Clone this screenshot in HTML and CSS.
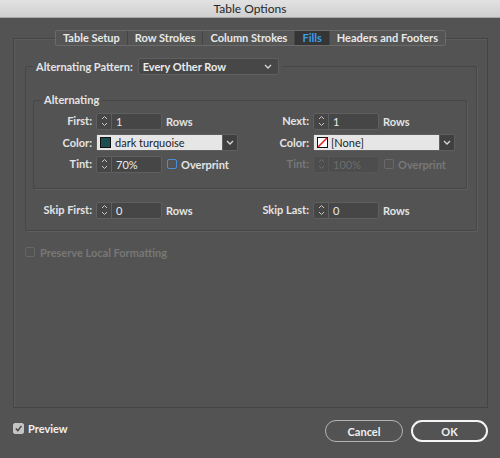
FILE: index.html
```html
<!DOCTYPE html>
<html lang="en">
<head>
    <meta charset="UTF-8">
    <title>Table Options</title>
    <link rel="stylesheet" href="styles.css">
</head>
<body>

<div class="titlebar">Table Options</div>

<div class="dialog">
    <div class="panel">
        <!-- Tabs -->
        <div class="tabs">
            <span class="tab">Table Setup</span>
            <span class="tab">Row Strokes</span>
            <span class="tab">Column Strokes</span>
            <span class="tab active">Fills</span>
            <span class="tab">Headers and Footers</span>
        </div>

        <fieldset class="group pattern">
            <legend class="pattern-legend">
                <span class="pattern-label">Alternating Pattern:</span>
                <span class="select">
                    Every Other Row
                    <svg class="chevron" width="8" height="5" viewBox="0 0 8 5"><path d="M1 1 L4 4 L7 1" fill="none" stroke="#d8d8d8" stroke-width="1.3"/></svg>
                </span>
            </legend>

            <fieldset class="group alternating">
                <legend class="group-title">Alternating</legend>
                <div class="grid">
                    <label class="lbl">First:</label>
                    <div class="cell">
                        <span class="spinner">
                            <span class="arrows"><svg width="7" height="12" viewBox="0 0 7 12"><path d="M1 4 L3.5 1.5 L6 4 M1 8 L3.5 10.5 L6 8" fill="none" stroke="#c8c8c8" stroke-width="1"/></svg></span>
                            <span class="value">1</span>
                        </span>
                        <span class="unit">Rows</span>
                    </div>
                    <label class="lbl">Next:</label>
                    <div class="cell">
                        <span class="spinner">
                            <span class="arrows"><svg width="7" height="12" viewBox="0 0 7 12"><path d="M1 4 L3.5 1.5 L6 4 M1 8 L3.5 10.5 L6 8" fill="none" stroke="#c8c8c8" stroke-width="1"/></svg></span>
                            <span class="value">1</span>
                        </span>
                        <span class="unit">Rows</span>
                    </div>

                    <label class="lbl">Color:</label>
                    <div class="cell">
                        <span class="color-select">
                            <span class="color-value"><span class="swatch turquoise"></span>dark turquoise</span>
                            <span class="color-arrow"><svg width="8" height="5" viewBox="0 0 8 5"><path d="M1 1 L4 4 L7 1" fill="none" stroke="#d8d8d8" stroke-width="1.3"/></svg></span>
                        </span>
                    </div>
                    <label class="lbl">Color:</label>
                    <div class="cell">
                        <span class="color-select">
                            <span class="color-value">
                                <svg class="swatch-none" width="11" height="11" viewBox="0 0 11 11"><rect x="0.5" y="0.5" width="10" height="10" fill="#fff" stroke="#111"/><path d="M1 10 L10 1" stroke="#e0202a" stroke-width="1.6"/></svg>[None]
                            </span>
                            <span class="color-arrow"><svg width="8" height="5" viewBox="0 0 8 5"><path d="M1 1 L4 4 L7 1" fill="none" stroke="#d8d8d8" stroke-width="1.3"/></svg></span>
                        </span>
                    </div>

                    <label class="lbl">Tint:</label>
                    <div class="cell">
                        <span class="spinner">
                            <span class="arrows"><svg width="7" height="12" viewBox="0 0 7 12"><path d="M1 4 L3.5 1.5 L6 4 M1 8 L3.5 10.5 L6 8" fill="none" stroke="#c8c8c8" stroke-width="1"/></svg></span>
                            <span class="value">70%</span>
                        </span>
                        <span class="check focus"></span>
                        <span class="check-label">Overprint</span>
                    </div>
                    <label class="lbl disabled">Tint:</label>
                    <div class="cell disabled">
                        <span class="spinner">
                            <span class="arrows"><svg width="7" height="12" viewBox="0 0 7 12"><path d="M1 4 L3.5 1.5 L6 4 M1 8 L3.5 10.5 L6 8" fill="none" stroke="#6a6a6a" stroke-width="1"/></svg></span>
                            <span class="value">100%</span>
                        </span>
                        <span class="check"></span>
                        <span class="check-label">Overprint</span>
                    </div>
                </div>
            </fieldset>

            <div class="grid skip">
                <label class="lbl">Skip First:</label>
                <div class="cell">
                    <span class="spinner">
                        <span class="arrows"><svg width="7" height="12" viewBox="0 0 7 12"><path d="M1 4 L3.5 1.5 L6 4 M1 8 L3.5 10.5 L6 8" fill="none" stroke="#c8c8c8" stroke-width="1"/></svg></span>
                        <span class="value">0</span>
                    </span>
                    <span class="unit">Rows</span>
                </div>
                <label class="lbl">Skip Last:</label>
                <div class="cell">
                    <span class="spinner">
                        <span class="arrows"><svg width="7" height="12" viewBox="0 0 7 12"><path d="M1 4 L3.5 1.5 L6 4 M1 8 L3.5 10.5 L6 8" fill="none" stroke="#c8c8c8" stroke-width="1"/></svg></span>
                        <span class="value">0</span>
                    </span>
                    <span class="unit">Rows</span>
                </div>
            </div>
        </fieldset>

        <div class="preserve disabled">
            <span class="check"></span>
            <span class="check-label">Preserve Local Formatting</span>
        </div>
    </div>

    <!-- Rodapé -->
    <div class="footer">
        <div class="preview">
            <span class="check checked"><svg width="9" height="9" viewBox="0 0 9 9"><path d="M1.8 4.6 L3.8 6.6 L7.4 2" fill="none" stroke="#444" stroke-width="1.4"/></svg></span>
            <span class="check-label">Preview</span>
        </div>
        <div class="buttons">
            <button class="btn">Cancel</button>
            <button class="btn primary">OK</button>
        </div>
    </div>
</div>

</body>
</html>
```

FILE: styles.css
```css
body {
    margin: 0;
    background-color: #535353;
    font-family: Lato, "Open Sans", sans-serif;
    font-size: 11px;
    font-weight: bold;
    color: #e4e4e4;
}
.titlebar {
    height: 17px;
    line-height: 17px;
    text-align: center;
    font-size: 12px;
    font-weight: normal;
    color: #262626;
    background: linear-gradient(#e2e2e2, #cfcfcf);
    border-bottom: 1px solid #a8a8a8;
}
.dialog {
    padding: 20px 12px 0 13px;
}
.panel {
    height: 370px;
    box-sizing: border-box;
    border: 1px solid #444;
    box-shadow: inset 1px 1px 0 #5c5c5c;
}
.tabs {
    display: flex;
    width: fit-content;
    margin: -9px auto 0;
    border: 1px solid #6a6a6a;
    border-radius: 2px;
    background-color: #555;
}
.tab {
    line-height: 14px;
    padding: 0 7px;
    border-left: 1px solid #444;
    color: #e8e8e8;
}
.tab:first-child {
    border-left: none;
}
.tab.active {
    background-color: #353535;
    color: #3f9de8;
}
.group {
    margin: 0;
    padding: 0;
    border: 1px solid #474747;
    box-shadow: 1px 1px 0 #5e5e5e;
    border-radius: 2px;
}
.pattern {
    margin: 12px 10px 0 11px;
    padding-bottom: 12px;
}
.pattern-legend {
    display: flex;
    align-items: center;
    margin-left: 7px;
    padding: 0 3px;
    height: 17px;
}
.pattern-label {
    margin-right: 5px;
}
.select {
    display: flex;
    align-items: center;
    justify-content: space-between;
    box-sizing: border-box;
    width: 141px;
    height: 17px;
    padding: 0 6px 0 4px;
    background-color: #474747;
    border: 1px solid #5f5f5f;
    border-radius: 3px;
    color: #ececec;
}
.alternating {
    margin: 18px 9px 0 7px;
    padding: 6px 0 16px;
}
.group-title {
    margin-left: 7px;
    padding: 0 3px;
    line-height: 14px;
}
.grid {
    display: grid;
    grid-template-columns: 58px 151px 58px auto;
    column-gap: 4px;
    row-gap: 5.5px;
}
.skip {
    margin-top: 13px;
    padding-left: 8px;
}
.lbl {
    text-align: right;
    line-height: 16px;
}
.cell {
    display: flex;
    align-items: center;
    height: 16px;
}
.spinner {
    display: flex;
    box-sizing: border-box;
    width: 66px;
    height: 17px;
    background-color: #464646;
    border: 1px solid #5f5f5f;
    border-radius: 2px;
}
.arrows {
    display: flex;
    align-items: center;
    justify-content: center;
    width: 14px;
    border-right: 1px solid #5f5f5f;
}
.value {
    padding-left: 4px;
    line-height: 15px;
    font-weight: normal;
    color: #ececec;
}
.unit {
    margin-left: 4px;
}
.color-select {
    display: flex;
    box-sizing: border-box;
    width: 142px;
    height: 17px;
    border: 1px solid #5f5f5f;
    border-radius: 2px;
}
.color-value {
    flex: 1;
    display: flex;
    align-items: center;
    padding-left: 3px;
    background-color: #e6e6e6;
    color: #1c1c1c;
    font-weight: normal;
}
.swatch {
    width: 9px;
    height: 9px;
    margin-right: 4px;
    border: 1px solid #111;
}
.turquoise {
    background-color: #1d4e50;
}
.swatch-none {
    margin-right: 3px;
}
.color-arrow {
    display: flex;
    align-items: center;
    justify-content: center;
    width: 14px;
    background-color: #404040;
    border-left: 1px solid #5f5f5f;
}
.check {
    display: inline-flex;
    align-items: center;
    justify-content: center;
    box-sizing: border-box;
    width: 10px;
    height: 10px;
    margin-left: 5px;
    border: 1px solid #6a6a6a;
    border-radius: 2px;
}
.check.focus {
    border: 1.5px solid #4a8fd6;
}
.check-label {
    margin-left: 4px;
}
.disabled {
    color: #787878;
}
.disabled .spinner {
    background-color: #4d4d4d;
    border-color: #565656;
}
.disabled .arrows {
    border-color: #565656;
}
.disabled .value {
    color: #6c6c6c;
}
.preserve {
    display: flex;
    align-items: center;
    margin: 14px 0 0 11px;
    height: 14px;
}
.preserve .check {
    margin-left: 0;
    border-color: #666;
}
.preserve .check-label {
    margin-left: 5px;
}
.footer {
    display: flex;
    justify-content: space-between;
    align-items: center;
    margin-top: 12px;
    height: 22px;
}
.preview {
    display: flex;
    align-items: center;
    margin-bottom: 5px;
    color: #f0f0f0;
}
.preview .check {
    margin-left: 0;
    width: 11px;
    height: 11px;
}
.check.checked {
    background-color: #c4c4c4;
    border-color: #c4c4c4;
}
.buttons {
    display: flex;
    gap: 8px;
}
.btn {
    width: 78px;
    height: 22px;
    border: 1.5px solid #b4b4b4;
    border-radius: 11px;
    background-color: #535353;
    font-family: Lato, "Open Sans", sans-serif;
    font-size: 11px;
    font-weight: bold;
    color: #f0f0f0;
    cursor: pointer;
}
.btn.primary {
    width: 77px;
    border: 2px solid #f4f4f4;
}
```
